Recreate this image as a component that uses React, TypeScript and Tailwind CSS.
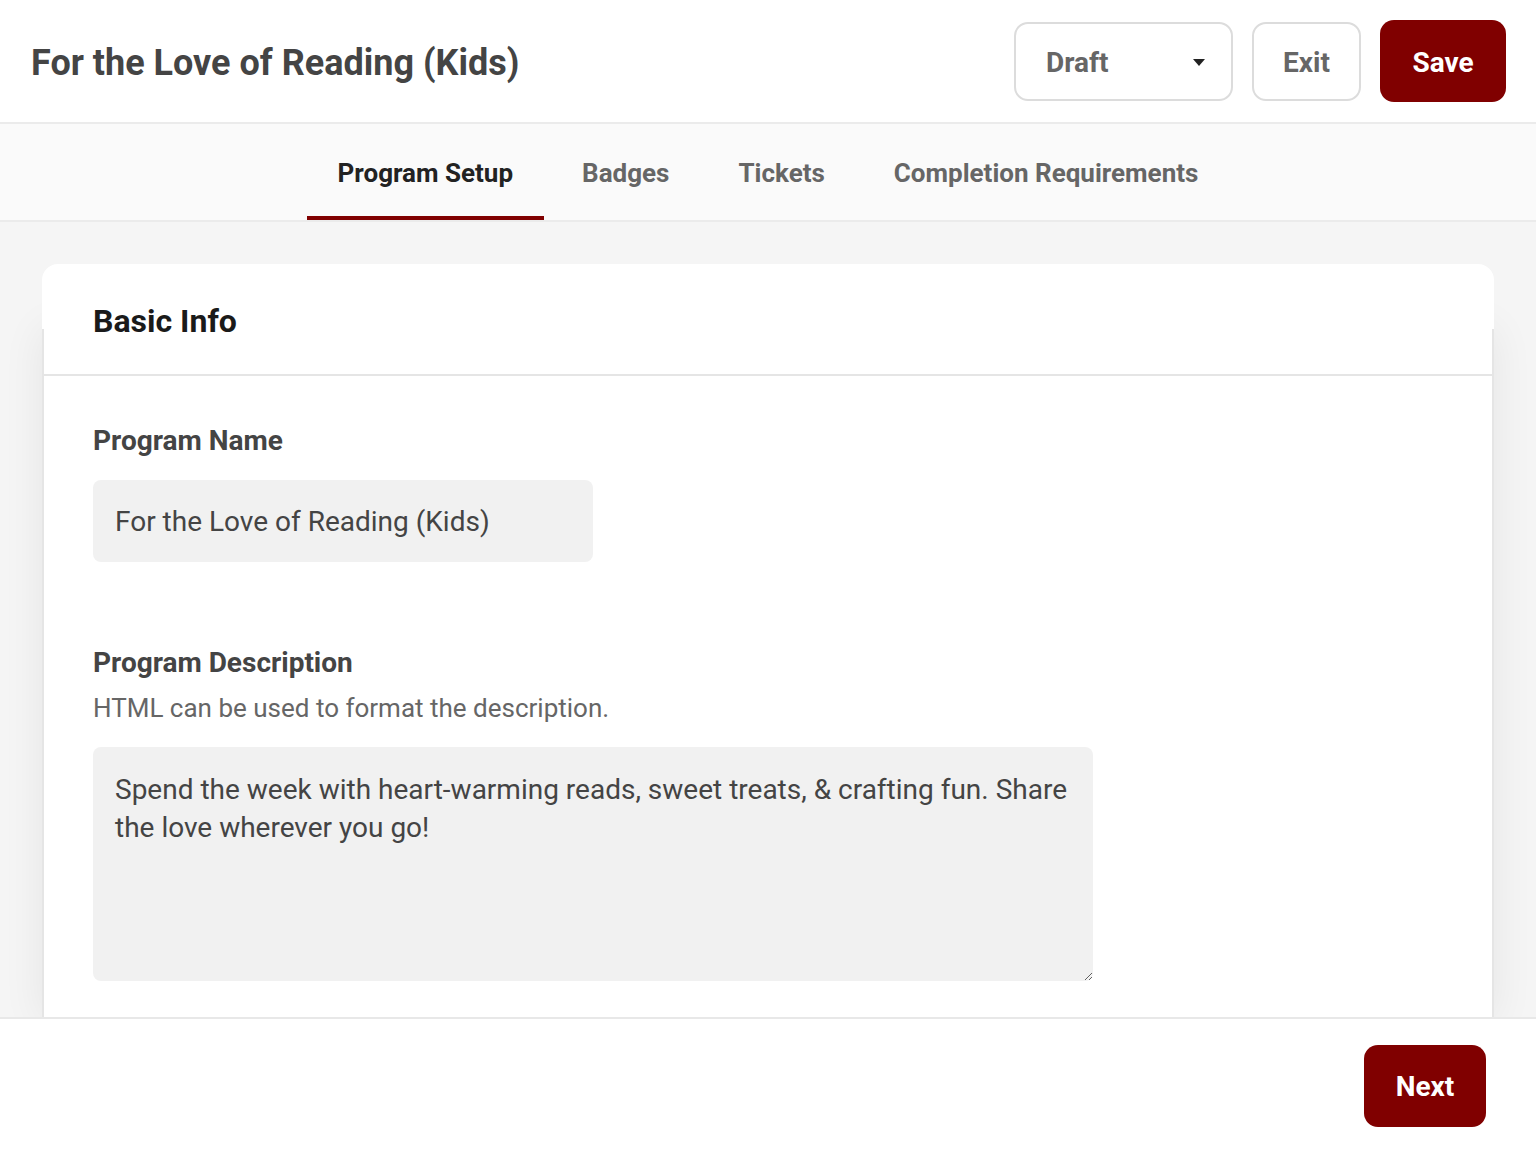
import * as React from 'react';

const TABS = ['Program Setup', 'Badges', 'Tickets', 'Completion Requirements'];

function Caret() {
  return (
    <svg width="12" height="7" viewBox="0 0 12 7" className="text-[#222]">
      <path d="M0 0h12L6 7z" fill="currentColor" />
    </svg>
  );
}

export default function App() {
  const [tab, setTab] = React.useState(0);

  return (
    <div className="flex h-[1152px] flex-col overflow-hidden bg-white font-['Roboto',sans-serif] text-[#444]">
      {/* Top bar */}
      <header className="flex h-[124px] shrink-0 items-center justify-between border-b-2 border-[#ebebeb] pl-[31px] pr-[30px]">
        <h1 className="pt-[3px] text-[36px] font-bold leading-none text-[#444]">
          For the Love of Reading (Kids)
        </h1>
        <div className="flex items-center gap-[19px]">
          <button className="flex h-[79px] w-[219px] items-center justify-between rounded-[14px] border-2 border-[#dcdcdc] bg-white pl-[30px] pr-[26px] pt-[3px] text-[28px] font-bold text-[#666]">
            Draft
            <Caret />
          </button>
          <button className="h-[79px] w-[109px] rounded-[14px] border-2 border-[#dcdcdc] bg-white pt-[3px] text-[28px] font-bold text-[#666]">
            Exit
          </button>
          <button className="h-[82px] w-[126px] rounded-[14px] bg-[#800000] pt-[3px] text-[28px] font-bold text-white">
            Save
          </button>
        </div>
      </header>

      {/* Tabs */}
      <nav className="flex h-[98px] shrink-0 justify-center gap-[7px] border-b-2 border-[#ebebeb] bg-[#fafafa]">
        {TABS.map((t, i) => (
          <button
            key={t}
            onClick={() => setTab(i)}
            className={
              i === tab
                ? 'border-b-4 border-[#800000] px-[31px] pt-[6px] text-[26px] font-bold text-[#222]'
                : 'border-b-4 border-transparent px-[31px] pt-[6px] text-[26px] font-bold text-[#666]'
            }
          >
            {t}
          </button>
        ))}
      </nav>

      {/* Content */}
      <main className="min-h-0 flex-1 overflow-hidden bg-[#f5f5f5] px-[42px] pt-[42px]">
        <div className="relative z-10 h-[65px] rounded-t-[16px] bg-white px-[51px] pt-[40px]">
          <h2 className="text-[32px] font-bold leading-[34px] text-[#1a1a1a]">Basic Info</h2>
        </div>
        <div className="border-x-2 border-[#e5e5e5] bg-white shadow-[0_0_40px_rgba(0,0,0,0.07)]">
          <div className="h-[47px] border-b-2 border-[#e5e5e5]" />
          <div className="px-[49px] pt-[50px] pb-[40px]">
            <label className="block text-[28px] font-bold leading-[30px] text-[#444]">
              Program Name
            </label>
            <input
              readOnly
              value="For the Love of Reading (Kids)"
              className="mt-[24px] block h-[82px] w-[500px] rounded-[8px] bg-[#f1f1f1] px-[22px] text-[28px] text-[#444] outline-none"
            />

            <label className="mt-[86px] block text-[28px] font-bold leading-[30px] text-[#444]">
              Program Description
            </label>
            <p className="mt-[15px] text-[26px] leading-[30px] text-[#666]">
              HTML can be used to format the description.
            </p>
            <textarea
              readOnly
              defaultValue="Spend the week with heart-warming reads, sweet treats, & crafting fun. Share the love wherever you go!"
              className="mt-[24px] block h-[234px] w-[1000px] rounded-[8px] bg-[#f1f1f1] px-[22px] py-[24px] text-[28px] leading-[38px] text-[#444] outline-none"
            />
          </div>
        </div>
      </main>

      {/* Footer */}
      <footer className="flex h-[135px] shrink-0 items-center justify-end border-t-2 border-[#e8e8e8] bg-white pr-[50px] pt-[1px]">
        <button className="h-[82px] w-[122px] rounded-[14px] bg-[#800000] pt-[2px] text-[28px] font-bold text-white">
          Next
        </button>
      </footer>
    </div>
  );
}
